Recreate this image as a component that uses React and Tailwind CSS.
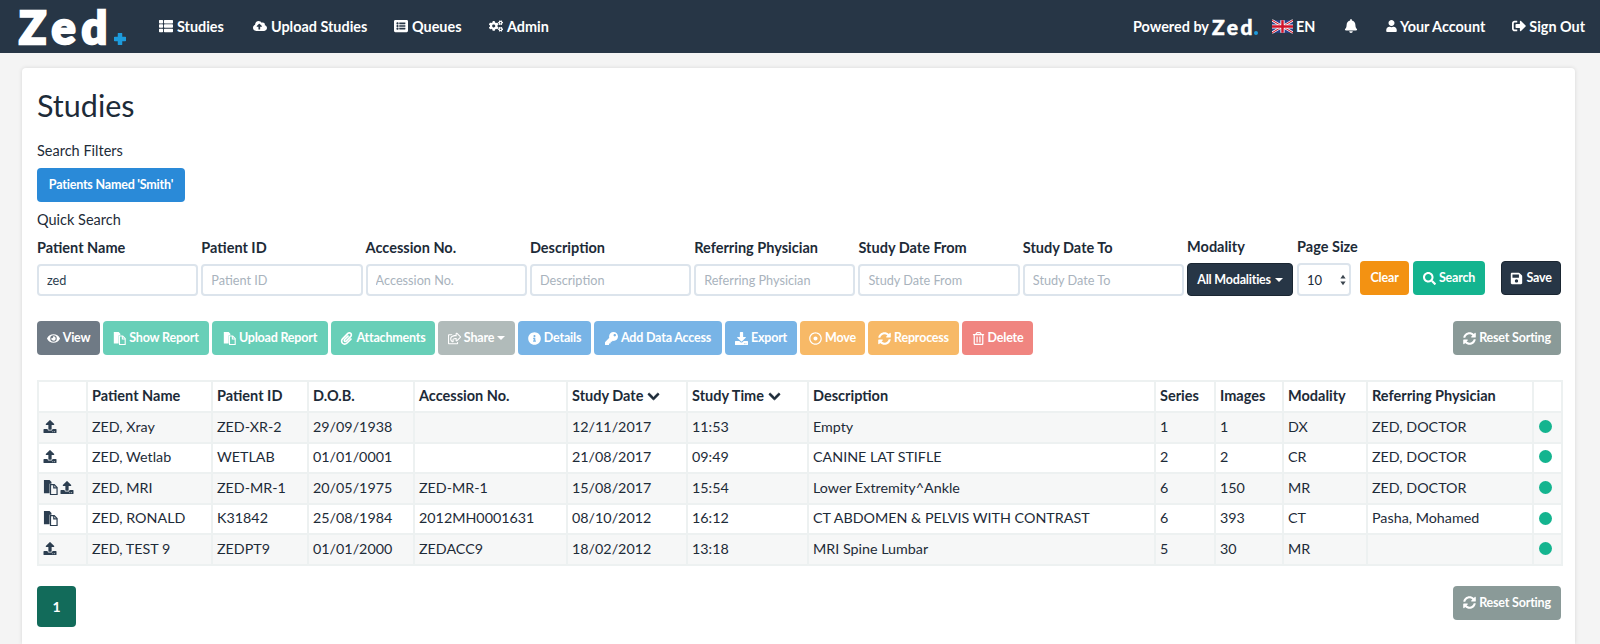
import React from "react";
import {
  FaThList,
  FaCloudUploadAlt,
  FaListAlt,
  FaCogs,
  FaBell,
  FaUser,
  FaSignOutAlt,
  FaSave,
  FaSearch,
  FaEye,
  FaPaperclip,
  FaRegShareSquare,
  FaInfoCircle,
  FaKey,
  FaDownload,
  FaRegDotCircle,
  FaSyncAlt,
  FaRegTrashAlt,
  FaUpload,
  FaChevronDown,
} from "react-icons/fa";

// two sheets, the front one outlined with a folded corner
const FilesIcon = ({ className }) => (
  <svg viewBox="0 0 16 16" className={className}>
    <path d="M1 0h6l2 2v2H7v10H1z" fill="currentColor" />
    <path d="M8 5h4l3 3v7.500H8z" fill="none" stroke="currentColor" strokeWidth="1.300" />
    <path d="M11.500 5v3.500H15" fill="none" stroke="currentColor" strokeWidth="1.300" />
  </svg>
);

const UkFlag = () => (
  <svg viewBox="0 0 60 36" className="w-[21px] h-[15px]">
    <rect width="60" height="36" fill="#27408b" />
    <path d="M0 0L60 36M60 0L0 36" stroke="#fff" strokeWidth="7" />
    <path d="M0 0L60 36M60 0L0 36" stroke="#cf142b" strokeWidth="3" />
    <path d="M30 0V36M0 18H60" stroke="#fff" strokeWidth="12" />
    <path d="M30 0V36M0 18H60" stroke="#cf142b" strokeWidth="7" />
  </svg>
);

const Caret = () => (
  <span className="inline-block align-middle border-x-[4px] border-t-[4px] border-x-transparent border-t-current" />
);

const navLeft = [
  { label: "Studies", icon: FaThList, box: "w-[94px]" },
  { label: "Upload Studies", icon: FaCloudUploadAlt, box: "w-[141px]" },
  { label: "Queues", icon: FaListAlt, box: "w-[95px]" },
  { label: "Admin", icon: FaCogs, box: "w-[70px]" },
];

const filters = [
  { label: "Patient Name", value: "zed" },
  { label: "Patient ID" },
  { label: "Accession No." },
  { label: "Description" },
  { label: "Referring Physician" },
  { label: "Study Date From" },
  { label: "Study Date To" },
];

const actions = [
  { label: "View", icon: FaEye, cls: "w-[63px] bg-[#6f7a85]" },
  { label: "Show Report", icon: FilesIcon, cls: "w-[106px] bg-[#68cfb8]" },
  { label: "Upload Report", icon: FilesIcon, cls: "w-[116px] bg-[#68cfb8]" },
  { label: "Attachments", icon: FaPaperclip, cls: "w-[104px] bg-[#68cfb8]" },
  { label: "Share", icon: FaRegShareSquare, cls: "w-[77px] bg-[#b1bbba]", caret: true },
  { label: "Details", icon: FaInfoCircle, cls: "w-[73px] bg-[#78b4e6]" },
  { label: "Add Data Access", icon: FaKey, cls: "w-[128px] bg-[#78b4e6]" },
  { label: "Export", icon: FaDownload, cls: "w-[72px] bg-[#78b4e6]" },
  { label: "Move", icon: FaRegDotCircle, cls: "w-[65px] bg-[#f7b967]" },
  { label: "Reprocess", icon: FaSyncAlt, cls: "w-[91px] bg-[#f7b967]" },
  { label: "Delete", icon: FaRegTrashAlt, cls: "w-[71px] bg-[#f08580]" },
];

const columns = [
  { label: "", w: "w-[49px]" },
  { label: "Patient Name", w: "w-[125px]" },
  { label: "Patient ID", w: "w-[96px]" },
  { label: "D.O.B.", w: "w-[106px]" },
  { label: "Accession No.", w: "w-[153px]" },
  { label: "Study Date", w: "w-[120px]", sort: true },
  { label: "Study Time", w: "w-[121px]", sort: true },
  { label: "Description", w: "w-[347px]" },
  { label: "Series", w: "w-[60px]" },
  { label: "Images", w: "w-[68px]" },
  { label: "Modality", w: "w-[84px]" },
  { label: "Referring Physician", w: "w-[166px]" },
  { label: "", w: "w-[29px]" },
];

const rows = [
  { files: false, upload: true, cells: ["ZED, Xray", "ZED-XR-2", "29/09/1938", "", "12/11/2017", "11:53", "Empty", "1", "1", "DX", "ZED, DOCTOR"] },
  { files: false, upload: true, cells: ["ZED, Wetlab", "WETLAB", "01/01/0001", "", "21/08/2017", "09:49", "CANINE LAT STIFLE", "2", "2", "CR", "ZED, DOCTOR"] },
  { files: true, upload: true, cells: ["ZED, MRI", "ZED-MR-1", "20/05/1975", "ZED-MR-1", "15/08/2017", "15:54", "Lower Extremity^Ankle", "6", "150", "MR", "ZED, DOCTOR"] },
  { files: true, upload: false, cells: ["ZED, RONALD", "K31842", "25/08/1984", "2012MH0001631", "08/10/2012", "16:12", "CT ABDOMEN & PELVIS WITH CONTRAST", "6", "393", "CT", "Pasha, Mohamed"] },
  { files: false, upload: true, cells: ["ZED, TEST 9", "ZEDPT9", "01/01/2000", "ZEDACC9", "18/02/2012", "13:18", "MRI Spine Lumbar", "5", "30", "MR", ""] },
];

const Btn = ({ icon: Icon, label, cls, caret }) => (
  <button className={`flex justify-center items-center gap-[3px] rounded-[4px] font-bold text-[12.500px] text-white tracking-[-0.2px] whitespace-nowrap ${cls}`}>
    {Icon && <Icon className="w-[13px] h-[13px]" />}
    {label}
    {caret && <Caret />}
  </button>
);

export default function App() {
  return (
    <div className="flex flex-col bg-[#f4f4f4] h-[644px] overflow-hidden font-['Lato',sans-serif] text-[#1d2b38]">
      {/* Top bar */}
      <header className="flex items-center bg-[#273646] pr-[15px] h-[53px] font-bold text-[14.400px] text-white shrink-0">
        <div className="relative ml-[19px] w-[123px] h-[53px] font-black text-[45px] leading-[54px] tracking-[6px] [-webkit-text-stroke:2.5px_#ffffff]">
          Zed
          <svg viewBox="0 0 12 12" className="top-[33px] left-[95px] absolute w-[12px] h-[12px]">
            <path d="M6 1v10M1 6h10" stroke="#1d9bdc" strokeWidth="4.500" strokeLinecap="round" />
          </svg>
        </div>
        <nav className="flex ml-[17px]">
          {navLeft.map((item) => (
            <a key={item.label} className={`flex items-center gap-[4px] ${item.box}`}>
              <item.icon className="w-[14px] h-[14px]" />
              {item.label}
            </a>
          ))}
        </nav>
        <div className="flex items-center ml-auto">
          <span>Powered by</span>
          <span className="relative ml-[3px] w-[60px] font-black text-[21px] leading-none tracking-[2.500px] [-webkit-text-stroke:0.5px_#ffffff]">
            Zed
            <span className="top-[15px] left-[42px] absolute bg-[#1d9bdc] rounded-full w-[4px] h-[4px]" />
          </span>
          <UkFlag />
          <span className="ml-[3px] w-[48px]">EN</span>
          <FaBell className="w-[14px] h-[14px]" />
          <FaUser className="ml-[28px] w-[11px] h-[12px]" />
          <span className="ml-[3px]">Your Account</span>
          <FaSignOutAlt className="ml-[27px] w-[14px] h-[14px]" />
          <span className="ml-[3px]">Sign Out</span>
        </div>
      </header>

      {/* Main card */}
      <main className="flex-1 bg-white shadow-[0_0_4px_rgba(0,0,0,0.12)] mt-[15px] ml-[22px] pt-[16px] pr-[14px] pl-[15px] rounded-t-[4px] w-[1553px]">
        <h1 className="text-[30.500px] leading-[42px]">Studies</h1>
        <p className="mt-[15px] text-[14.500px] leading-[20px]">Search Filters</p>
        <Btn label="Patients Named 'Smith'" cls="mt-[7px] w-[148px] h-[34px] bg-[#2a8ad8]" />
        <p className="mt-[8px] text-[14.500px] leading-[20px]">Quick Search</p>

        {/* Quick search fields */}
        <div className="flex items-end mt-[7px]">
          <div className="flex gap-[3px]">
            {filters.map((f) => (
              <label key={f.label} className="flex flex-col gap-[6px] w-[161.300px] font-bold text-[14.500px] leading-[20px]">
                {f.label}
                <input
                  defaultValue={f.value}
                  placeholder={f.label}
                  className="px-[8px] border-[#dce4ec] border-2 rounded-[4px] h-[32px] font-normal text-[12.700px] placeholder:text-[#a9b3bd] text-[#2c3e50]"
                />
              </label>
            ))}
          </div>
          <div className="flex flex-col gap-[6px] ml-[3px] w-[106px] font-bold text-[14.500px] leading-[20px]">
            Modality
            <button className="flex justify-center items-center gap-[4px] bg-[#273646] border border-[#1a2632] rounded-[4px] h-[33px] text-[12.500px] text-white tracking-[-0.2px]">
              All Modalities
              <Caret />
            </button>
          </div>
          <div className="flex flex-col gap-[6px] ml-[4px] w-[54px] font-bold text-[14.500px] leading-[20px] whitespace-nowrap">
            Page Size
            <div className="flex justify-between items-center pr-[3px] pl-[8px] border-[#dce4ec] border-2 rounded-[4px] h-[33px] font-normal text-[13px]">
              10
              <svg viewBox="0 0 8 14" className="w-[6px] h-[12px] text-[#3c4650]">
                <path d="M4 0l3.500 5h-7zM4 14L.500 9h7z" fill="currentColor" />
              </svg>
            </div>
          </div>
          <Btn label="Clear" cls="ml-[9px] w-[49px] h-[34px] bg-[#f39212] mb-[1px]" />
          <Btn label="Search" icon={FaSearch} cls="ml-[4px] w-[72px] h-[34px] bg-[#14b48f] mb-[1px]" />
          <Btn label="Save" icon={FaSave} cls="ml-auto w-[60px] h-[34px] bg-[#273646] border border-[#1a2632] mb-[1px]" />
        </div>

        {/* Actions */}
        <div className="flex justify-between mt-[25px]">
          <div className="flex gap-[3px] h-[34px]">
            {actions.map((a) => (
              <Btn key={a.label} {...a} />
            ))}
          </div>
          <Btn label="Reset Sorting" icon={FaSyncAlt} cls="w-[108px] h-[34px] bg-[#8a9a98]" />
        </div>

        {/* Results */}
        <table className="mt-[25px] border-[#edf1f1] border-collapse w-[1524px] text-[14.300px] table-fixed">
          <thead>
            <tr className="h-[31px]">
              {columns.map((c, i) => (
                <th key={i} className={`px-[4px] border-2 border-[#edf1f1] font-bold text-[14.500px] text-left whitespace-nowrap ${c.w}`}>
                  <span className="flex items-center gap-[4px] -mt-[1px]">
                    {c.label}
                    {c.sort && <FaChevronDown className="stroke-[30] stroke-current w-[13px] h-[13px]" />}
                  </span>
                </th>
              ))}
            </tr>
          </thead>
          <tbody>
            {rows.map((row, i) => (
              <tr key={i} className={`h-[30.600px] ${i % 2 === 0 ? "bg-[#f6f7f7]" : "bg-white"}`}>
                <td className="px-[4px] pb-[2px] border-2 border-[#edf1f1]">
                  <span className="flex items-center gap-[2px] text-[#2c3e50]">
                    {row.files && <FilesIcon className="w-[15px] h-[15px]" />}
                    {row.upload && <FaUpload className="w-[14px] h-[13px]" />}
                  </span>
                </td>
                {row.cells.map((cell, j) => (
                  <td key={j} className="px-[4px] pb-[2px] border-2 border-[#edf1f1] whitespace-nowrap">
                    {cell}
                  </td>
                ))}
                <td className="px-[5px] pb-[2px] border-2 border-[#edf1f1]">
                  <span className="block bg-[#14b48f] rounded-full w-[13px] h-[13px]" />
                </td>
              </tr>
            ))}
          </tbody>
        </table>

        {/* Pagination */}
        <div className="flex justify-between items-start mt-[20px]">
          <button className="bg-[#126b5a] rounded-[4px] w-[39px] h-[41px] font-bold text-[14px] text-white">1</button>
          <Btn label="Reset Sorting" icon={FaSyncAlt} cls="w-[108px] h-[34px] bg-[#8a9a98]" />
        </div>
      </main>
    </div>
  );
}
